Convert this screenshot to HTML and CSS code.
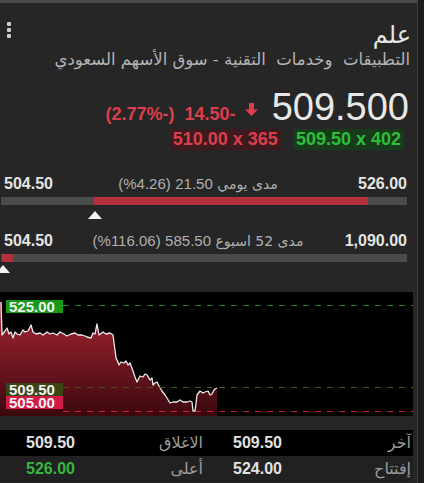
FILE: index.html
```html
<!DOCTYPE html>
<html lang="ar" dir="rtl">
<head>
  <meta charset="UTF-8" />
  <meta name="viewport" content="width=device-width, initial-scale=1.0" />
  <title>علم</title>
  <link rel="stylesheet" href="styles.css">
</head>
<body>

<div class="panel">

  <header class="head">
    <div class="head-top">
      <h1 class="name">علم</h1>
      <span class="menu"><i></i><i></i><i></i></span>
    </div>
    <p class="sector">التطبيقات&nbsp; وخدمات&nbsp; التقنية - سوق الأسهم السعودي</p>
  </header>

  <div class="price-row">
    <span class="price num">509.500</span>
    <svg class="arrow" width="13" height="13" viewBox="0 0 13 13"><path d="M4 0h5v6.5h4l-6.5 6.5-6.5-6.5h4z" fill="#dd3e4c"/></svg>
    <span class="chg num">14.50-</span>
    <span class="chg num">(2.77%-)</span>
  </div>

  <div class="book-row">
    <span class="book buy num">509.50 x 402</span>
    <span class="book sell num">510.00 x 365</span>
  </div>

  <div class="range range-day">
    <div class="range-text">
      <span class="num hi">526.00</span>
      <span class="range-label">مدى يومي <span class="num">21.50</span> <span class="num">(%4.26)</span></span>
      <span class="num lo">504.50</span>
    </div>
    <div class="track"><div class="fill" style="left: 93px; width: 274px;"></div></div>
    <div class="marker-row"><span class="marker" style="margin-left: 87px;"></span></div>
  </div>

  <div class="range range-year">
    <div class="range-text">
      <span class="num hi">1,090.00</span>
      <span class="range-label">مدى 52 اسبوع <span class="num">585.50</span> <span class="num">(%116.06)</span></span>
      <span class="num lo">504.50</span>
    </div>
    <div class="track"><div class="fill" style="left: 1px; width: 11px;"></div></div>
    <div class="marker-row"><span class="marker" style="margin-left: -5px;"></span></div>
  </div>

  <div class="chart">
    <svg width="413" height="124" viewBox="0 0 413 124">
      <defs>
        <linearGradient id="area" x1="0" y1="0" x2="0" y2="1">
          <stop offset="0" stop-color="#a92634"/>
          <stop offset="1" stop-color="#3c080e"/>
        </linearGradient>
      </defs>
      <polygon fill="url(#area)" points="0,10 1,10 2,43 5,39 7,36 9,42 11,40 13,46 15,40 17,42 20,43 23,38 25,40 28,39 31,33 33,40 36,42 40,41 43,43 47,40 50,42 53,41 57,43 60,40 64,42 67,44 71,42 75,41 78,43 82,43 85,44 87,45 91,46 93,41 95,42 97,32 99,43 103,40 106,42 110,41 113,43 116,66 117,68 119,73 121,70 124,71 126,69 128,73 130,71 133,79 135,85 137,90 140,84 143,85 145,82 147,83 150,88 152,86 153,93 155,91 157,90 160,96 162,99 165,103 167,106 170,111 173,110 177,110 180,108 183,110 187,110 190,109 192,110 193,119 195,119 196,112 197,103 200,99 203,101 205,100 208,99 210,103 212,102 214,98 215,97 217,96 217,124 0,124"/>
      <polyline fill="none" stroke="#ececec" stroke-width="1.3" stroke-linejoin="round" points="1,10 2,43 5,39 7,36 9,42 11,40 13,46 15,40 17,42 20,43 23,38 25,40 28,39 31,33 33,40 36,42 40,41 43,43 47,40 50,42 53,41 57,43 60,40 64,42 67,44 71,42 75,41 78,43 82,43 85,44 87,45 91,46 93,41 95,42 97,32 99,43 103,40 106,42 110,41 113,43 116,66 117,68 119,73 121,70 124,71 126,69 128,73 130,71 133,79 135,85 137,90 140,84 143,85 145,82 147,83 150,88 152,86 153,93 155,91 157,90 160,96 162,99 165,103 167,106 170,111 173,110 177,110 180,108 183,110 187,110 190,109 192,110 193,119 195,119 196,112 197,103 200,99 203,101 205,100 208,99 210,103 212,102 214,98 215,97 217,96"/>
      <line x1="63" y1="13.5" x2="413" y2="13.5" stroke="#1f8f22" stroke-width="1" stroke-dasharray="6 6"/>
      <line x1="63" y1="95.5" x2="413" y2="95.5" stroke="#48561a" stroke-width="1" stroke-dasharray="6 6"/>
      <line x1="63" y1="119.5" x2="413" y2="119.5" stroke="#cf1c44" stroke-width="1" stroke-dasharray="6 6"/>
    </svg>
    <span class="tag tag-high">525.00</span>
    <span class="tag tag-last">509.50</span>
    <span class="tag tag-low">505.00</span>
  </div>

  <div class="stats">
    <div class="stats-row dark">
      <span class="stat-label">آخر</span>
      <span class="stat-value num">509.50</span>
      <span class="stat-label">الاغلاق</span>
      <span class="stat-value num">509.50</span>
    </div>
    <div class="stats-row">
      <span class="stat-label">إفتتاح</span>
      <span class="stat-value num">524.00</span>
      <span class="stat-label">أعلى</span>
      <span class="stat-value num up">526.00</span>
    </div>
  </div>

</div>

</body>
</html>
```

FILE: styles.css
```css
* { box-sizing: border-box; }
body {
  margin: 0;
  padding: 0;
  background: #1d1d1d;
  font-family: 'Liberation Sans', 'DejaVu Sans', sans-serif;
  color: #e4e4e4;
  overflow: hidden;
}
.num {
  direction: ltr;
  unicode-bidi: isolate;
  font-family: 'Liberation Sans', sans-serif;
}
.panel {
  width: 418px;
  height: 483px;
  margin: 0 auto 0 0;
  background: #262626;
  border-top: 3px solid #484848;
  border-right: 1px solid #3d3d3d;
  display: flex;
  flex-direction: column;
  overflow: hidden;
}

/* header */
.head { padding: 17px 6px 0 7px; }
.head-top {
  display: flex;
  justify-content: space-between;
  height: 30px;
}
.name {
  margin: 0;
  font-family: 'DejaVu Sans', sans-serif;
  font-weight: normal;
  font-size: 24px;
  line-height: 30px;
  color: #e6e6e6;
}
.menu {
  display: flex;
  flex-direction: column;
  gap: 2px;
  margin-top: 2px;
}
.menu i {
  display: block;
  width: 4px;
  height: 4px;
  border-radius: 1px;
  background: #cfcfcf;
}
.sector {
  margin: 0;
  padding-right: 1px;
  font-family: 'DejaVu Sans', sans-serif;
  font-size: 16.5px;
  line-height: 20px;
  color: #b4b4b4;
}

/* quote */
.price-row {
  display: flex;
  align-items: baseline;
  margin-top: 17px;
  padding-right: 8px;
  height: 40px;
}
.price {
  font-size: 38px;
  line-height: 40px;
  color: #e8e8e8;
  margin-left: 14px;
}
.arrow { margin-left: 9px; align-self: center; margin-top: 4px; }
.chg {
  font-size: 18px;
  font-weight: bold;
  color: #dd3e4c;
  margin-left: 10px;
}
.book-row {
  display: flex;
  gap: 12px;
  margin-top: 2px;
  padding-right: 13px;
}
.book {
  height: 21px;
  line-height: 21px;
  padding: 0 3px;
  font-size: 18px;
  font-weight: bold;
}
.book.buy { background: #173b1b; color: #2fbe3b; }
.book.sell { background: #3c1b1f; color: #dd3e4c; }

/* ranges */
.range { padding: 0 10px 0 1px; }
.range-day { margin-top: 24px; }
.range-year { margin-top: 12px; }
.range-text {
  display: grid;
  align-items: baseline;
  padding-left: 3px;
  height: 20px;
  line-height: 20px;
}
.range-text > span { grid-area: 1 / 1; }
.range-text .hi { font-size: 16px; font-weight: bold; justify-self: start; }
.range-text .lo { font-size: 16px; font-weight: bold; justify-self: end; }
.range-label {
  justify-self: center;
  font-family: 'DejaVu Sans', sans-serif;
  font-size: 14px;
  color: #b0b0b0;
  margin-right: 15px;
}
.range-label .num { font-size: 15px; }
.track {
  position: relative;
  height: 8px;
  margin-top: 3px;
  background: #4b4b4b;
}
.fill {
  position: absolute;
  top: 0;
  height: 8px;
  background: #b3323e;
}
.marker-row { direction: ltr; height: 8px; }
.range-day .marker-row { margin-top: 6px; }
.range-year .marker-row { margin-top: 3px; }
.marker {
  display: block;
  width: 0;
  height: 0;
  border-left: 7px solid transparent;
  border-right: 7px solid transparent;
  border-bottom: 8px solid #f4f4f4;
}

/* chart */
.chart {
  position: relative;
  width: 413px;
  height: 124px;
  margin-top: 19px;
  margin-right: 4px;
  background: #000;
  direction: ltr;
}
.chart svg { display: block; }
.tag {
  position: absolute;
  left: 6px;
  width: 57px;
  height: 13px;
  padding-left: 3px;
  font-family: 'Liberation Sans', sans-serif;
  font-weight: bold;
  font-size: 15px;
  line-height: 13px;
  color: #f2f2f2;
}
.tag-high { top: 8px; background: #169a18; }
.tag-last { top: 91px; background: #3a4416; }
.tag-low { top: 104px; background: #d31a46; }

/* stats */
.stats { margin-top: 14px; width: 413px; margin-right: 4px; }
.stats-row {
  display: grid;
  grid-template-columns: 129px 79px 128px 77px;
  height: 26px;
  line-height: 26px;
  background: #212121;
}
.stats-row.dark { background: #000; }
.stats-row span { padding-right: 2px; }
.stat-label {
  font-family: 'DejaVu Sans', sans-serif;
  font-size: 16px;
  color: #9c9c9c;
}
.stat-value {
  font-size: 16px;
  font-weight: bold;
  color: #e2e2e2;
  text-align: right;
}
.stat-value.up { color: #36b840; }
```
